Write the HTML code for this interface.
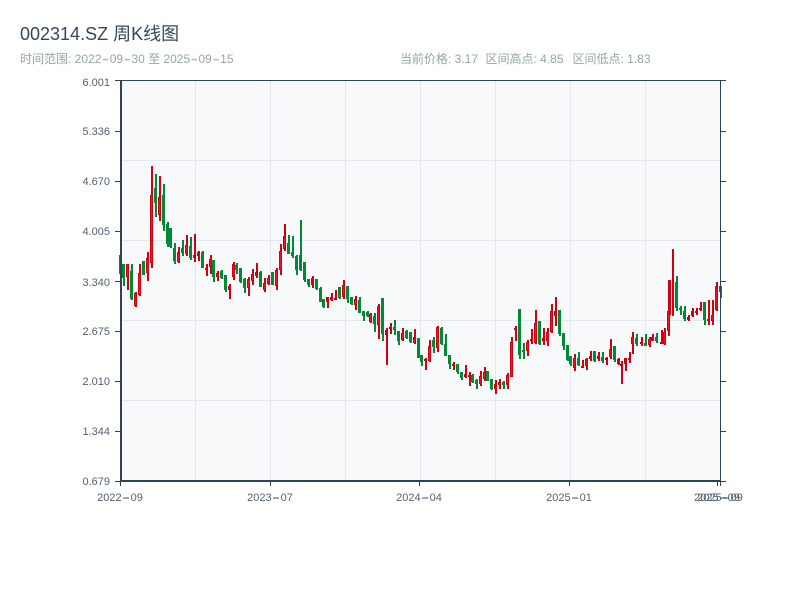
<!DOCTYPE html>
<html><head><meta charset="utf-8"><style>
html,body{margin:0;padding:0;background:#fff}
svg{display:block}
text{font-family:"WenQuanYi Zen Hei","Liberation Sans","Noto Sans CJK SC",sans-serif}
.a{font-size:22px;fill-opacity:.7}
.b{font-size:24px;fill-opacity:.6}
</style></head><body>
<svg width="800" height="600" viewBox="0 0 800 600" xmlns="http://www.w3.org/2000/svg">
<rect width="800" height="600" fill="#fff"/>
<text x="20" y="40" font-size="18" fill="#34495e">002314.SZ 周K线图</text>
<text x="20" y="63" font-size="12" fill="#95a5a6">时间范围: 2022<tspan class="a" dx=".5" dy="2.4">-</tspan><tspan dx=".5" dy="-2.4">09</tspan><tspan class="a" dx=".5" dy="2.4">-</tspan><tspan dx=".5" dy="-2.4">30</tspan> 至 2025<tspan class="a" dx=".5" dy="2.4">-</tspan><tspan dx=".5" dy="-2.4">09</tspan><tspan class="a" dx=".5" dy="2.4">-</tspan><tspan dx=".5" dy="-2.4">15</tspan></text>
<text x="400" y="63" font-size="12" fill="#95a5a6">当前价格: 3.17</text>
<text x="485.5" y="63" font-size="12" fill="#95a5a6">区间高点: 4.85</text>
<text x="572.5" y="63" font-size="12" fill="#95a5a6">区间低点: 1.83</text>
<rect x="121" y="81" width="599" height="400" fill="#f8f9fb"/>
<path d="M121 160.5H720M121 240.5H720M121 320.5H720M121 400.5H720M195.5 81V481M270.5 81V481M345.5 81V481M420.5 81V481M495.5 81V481M570.5 81V481M645.5 81V481" stroke="#e4e7ed" stroke-width="1" fill="none"/>
<g fill="none">
<path stroke="#008a35" stroke-width="2" d="M124 264V286M132 264V300M144 261V275M156 174V217M164 184V231M168 222V247M171 228V248M175 243V264M183 240V256M191 237V260M203 251V268M214 260V282M222 270V279M226 275V292M237 263V274M241 268V283M245 278V293M261 271V287M273 272V285M289 235V254M293 236V258M297 255V275M301 220V271M305 262V282M309 279V287M317 279V290M321 287V302M324 299V308M340 287V299M348 286V303M352 297V305M360 297V313M364 311V321M368 311V317M375 313V332M383 298V341M395 320V335M399 331V345M407 330V339M411 332V343M419 338V358M422 355V366M434 337V353M442 327V345M446 334V356M450 355V369M458 364V374M462 372V380M473 374V383M477 379V389M488 371V381M492 379V390M504 381V389M520 309V359M524 343V359M540 321V345M560 310V336M564 333V350M568 345V361M571 356V366M579 352V366M595 351V362M603 352V363M615 346V362M637 334V346M646 334V346M657 333V343M677 276V311M681 306V315M685 306V321M705 302V325M721 286V298M120 255V274"/>
<path transform="translate(-.5 0)" stroke="#008a35" stroke-width="3" d="M124 264V278M132 271V299M144 261V275M156 188V203M164 195V225M168 224V244M171 228V247M175 248V261M183 248V253M191 246V258M203 252V268M214 260V277M222 271V278M226 275V290M237 265V270M241 268V282M245 279V288M261 272V287M273 272V285M289 243V254M293 252V256M297 256V270M301 255V270M305 262V280M309 279V285M317 279V289M321 288V302M324 299V307M340 287V298M348 286V299M352 297V304M360 300V313M364 311V316M368 312V316M375 316V324M383 298V334M395 327V330M399 331V341M407 331V338M411 332V342M419 338V358M422 355V362M434 340V347M442 328V344M446 344V356M450 355V364M458 364V372M462 372V378M473 375V382M477 380V384M488 371V381M492 379V389M504 382V385M520 309V355M524 350V352M540 321V344M560 310V334M564 333V346M568 345V360M571 356V364M579 358V365M595 351V361M603 357V361M615 346V360M637 338V344M646 343V346M657 337V341M677 282V308M681 308V310M685 311V319M705 302V320M721 286V292"/>
<path stroke="#d00010" stroke-width="2" d="M128 264V290M136 292V307M140 264V296M148 252V281M152 166V268M160 176V221M179 247V263M187 235V256M195 234V262M199 251V261M207 264V276M211 255V274M218 271V281M230 284V299M234 262V280M249 277V296M253 269V285M257 263V278M265 278V292M269 275V285M277 268V290M281 244V275M285 224V251M313 276V288M328 297V308M332 293V301M336 290V300M344 280V299M356 296V310M371 313V323M379 304V339M387 328V365M391 323V334M403 328V341M415 329V344M426 358V370M430 340V362M438 326V352M454 362V370M466 365V378M470 372V386M481 371V386M485 367V381M496 380V394M500 379V389M508 373V389M512 337V377M516 326V341M528 340V356M532 329V344M536 310V344M544 328V345M548 328V346M552 304V333M556 297V326M575 354V371M583 360V368M587 358V370M591 351V361M599 352V361M607 357V365M611 339V359M619 358V365M622 361V384M626 358V371M630 352V363M633 332V354M642 337V346M650 337V347M653 334V341M662 330V344M665 328V345M669 310V336M673 249V316M689 315V321M693 308V317M697 308V315M701 302V311M709 300V325M713 300V325M717 282V311"/>
<path transform="translate(-.5 0)" stroke="#d00010" stroke-width="3" d="M128 264V277M136 293V306M140 273V295M148 258V273M152 195V263M160 197V215M179 252V262M187 245V254M195 255V258M199 252V256M207 268V270M211 259V267M218 273V277M230 286V290M234 264V277M249 279V288M253 274V281M257 272V276M265 283V290M269 278V284M277 270V286M281 251V270M285 236V249M313 278V285M328 297V302M332 297V300M336 298V300M344 285V297M356 299V305M371 314V322M379 306V325M387 330V335M391 327V329M403 333V340M415 337V343M426 359V361M430 346V361M438 327V348M454 364V366M466 374V377M470 375V377M481 376V384M485 372V379M496 384V389M500 382V385M508 375V385M512 342V377M516 328V330M528 342V351M532 339V341M536 323V343M544 338V341M548 332V341M552 311V332M556 311V316M575 358V368M583 366V368M587 359V366M591 356V359M599 356V359M607 358V360M611 349V357M619 359V364M622 364V366M626 358V364M630 358V360M633 337V344M642 342V344M650 339V345M653 337V341M662 342V344M665 332V344M669 311V331M670 280V315M689 317V320M693 311V316M697 311V313M701 308V310M709 319V321M713 315V321M717 286V310"/>
<path transform="translate(-.5 0)" stroke="#f0141e" stroke-width="1" d="M128 265V276M136 294V305M140 274V294M148 259V272M152 196V262M160 198V214M179 253V261M187 246V253M211 260V266M218 274V276M234 265V276M249 280V287M253 275V280M265 284V289M269 279V283M277 271V285M281 252V269M285 237V248M344 286V296M356 300V304M371 315V321M379 307V324M403 334V339M415 338V342M430 347V360M438 328V347M481 377V383M485 373V378M508 376V384M512 343V376M528 343V350M536 324V342M548 333V340M552 312V331M575 359V367M587 360V365M611 350V356M633 338V343M650 340V344M665 333V343M669 312V330M713 316V320M717 287V309"/>
</g>
<g fill="none" stroke="#2f4358">
<path stroke-width="2" d="M121 81V482M120 481H720"/>
<path stroke-width="1" d="M115 80.5H726M720.5 81V481M115 131.5H121M115 181.5H121M115 231.5H121M115 281.5H121M115 331.5H121M115 381.5H121M115 431.5H121M115 481.5H121M720 131.5H726M720 181.5H726M720 231.5H726M720 281.5H726M720 331.5H726M720 381.5H726M720 431.5H726M720 481.5H726M120.5 481V486M270.5 481V486M419.5 481V486M569.5 481V486M717.5 481V486M720.5 481V486"/>
</g>
<g font-size="11" fill="#556270" text-anchor="end">
<text x="110" y="86">6.001</text>
<text x="110" y="135">5.336</text>
<text x="110" y="185">4.670</text>
<text x="110" y="235">4.005</text>
<text x="110" y="286">3.340</text>
<text x="110" y="335">2.675</text>
<text x="110" y="385">2.010</text>
<text x="110" y="435">1.344</text>
<text x="110" y="485">0.679</text>
</g>
<g font-size="11" fill="#556270" text-anchor="middle">
<text x="120" y="501">2022<tspan class="b" dx=".5" dy="3.5">-</tspan><tspan dx=".5" dy="-3.5">09</tspan></text>
<text x="270" y="501">2023<tspan class="b" dx=".5" dy="3.5">-</tspan><tspan dx=".5" dy="-3.5">07</tspan></text>
<text x="419" y="501">2024<tspan class="b" dx=".5" dy="3.5">-</tspan><tspan dx=".5" dy="-3.5">04</tspan></text>
<text x="569" y="501">2025<tspan class="b" dx=".5" dy="3.5">-</tspan><tspan dx=".5" dy="-3.5">01</tspan></text>
<text x="717" y="501">2025<tspan class="b" dx=".5" dy="3.5">-</tspan><tspan dx=".5" dy="-3.5">09</tspan></text>
<text x="720" y="501">2025<tspan class="b" dx=".5" dy="3.5">-</tspan><tspan dx=".5" dy="-3.5">09</tspan></text>
</g>
</svg>
</body></html>
